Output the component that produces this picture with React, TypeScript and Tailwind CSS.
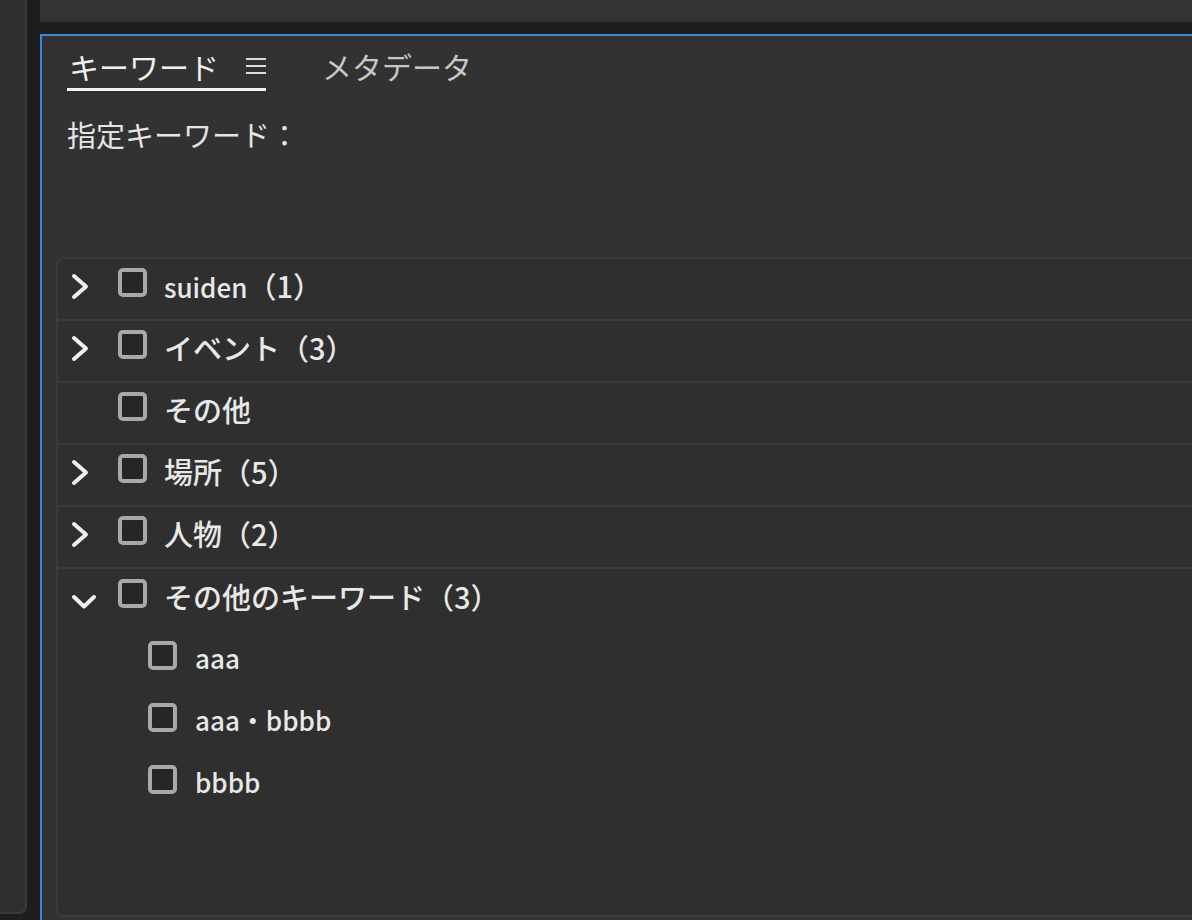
import React from 'react';

type Node = {
  name: string;
  count?: string;
  latin?: boolean;
  expandable?: boolean;
  open?: boolean;
  children?: string[];
};

const keywords: Node[] = [
  { name: 'suiden', count: '（1）', latin: true, expandable: true },
  { name: 'イベント', count: '（3）', expandable: true },
  { name: 'その他' },
  { name: '場所', count: '（5）', expandable: true },
  { name: '人物', count: '（2）', expandable: true },
  { name: 'その他のキーワード', count: '（3）', expandable: true, open: true, children: ['aaa', 'aaa・bbbb', 'bbbb'] },
];

const font = { fontFamily: '"Noto Sans CJK JP", "Noto Sans", sans-serif' };

function Chevron({ open }: { open?: boolean }) {
  if (open) {
    return (
      <svg width="28" height="18" viewBox="0 0 28 18" className="block mt-[12px]">
        <path d="M3 4 L13 13.5 L23 4" fill="none" stroke="#f0f0f0" strokeWidth="4" strokeLinecap="round" strokeLinejoin="round" />
      </svg>
    );
  }
  return (
    <svg width="20" height="28" viewBox="0 0 20 28" className="block mt-[4px]">
      <path d="M3 3 L15 13.5 L3 24" fill="none" stroke="#f0f0f0" strokeWidth="4" strokeLinecap="round" strokeLinejoin="round" />
    </svg>
  );
}

function Checkbox() {
  return <div className="w-[29px] h-[29px] mb-[6px] shrink-0 rounded-[5px] border-4 border-[#a8a8a8] bg-[#262626]" />;
}

function MenuIcon() {
  return (
    <svg width="20" height="18" viewBox="0 0 20 18" className="block">
      <path d="M0 2 H20 M0 9 H20 M0 16 H20" stroke="#dcdcdc" strokeWidth="2" />
    </svg>
  );
}

export default function App() {
  return (
    <div className="w-[1192px] h-[920px] bg-[#1e1e1e] flex overflow-hidden text-[#e8e8e8]" style={font}>
      {/* 左パネル */}
      <div className="w-[27px] h-[914px] shrink-0 bg-[#2f2f2f] border-r-2 border-b-2 border-[#3a3a3a] rounded-br-[8px]" />
      <div className="w-[13px] shrink-0" />

      <div className="flex-1 flex flex-col min-w-0">
        <div className="h-[22px] bg-[#333333] shrink-0" />
        <div className="h-[12px] shrink-0" />

        <div className="flex-1 flex flex-col bg-[#323232] border-l-2 border-t-2 border-[#3a86d8]">
          {/* タブ */}
          <div className="flex items-end pl-[25px] h-[55px]">
            <div className="flex items-center gap-[27px] pl-[2px] h-[48px] border-b-[3px] border-[#f2f2f2]">
              <span className="text-[30px] leading-none text-[#f0f0f0]">キーワード</span>
              <MenuIcon />
            </div>
            <div className="flex items-center h-[48px] ml-[56px] pb-[3px]">
              <span className="text-[30px] leading-none text-[#c6c6c6]">メタデータ</span>
            </div>
          </div>

          <div className="pl-[25px] mt-[29px] text-[29px] leading-none text-[#e4e4e4]">指定キーワード：</div>

          {/* キーワード一覧 */}
          <div className="flex-1 mt-[108px] ml-[14px] -mr-4 mb-[3px] border-2 border-[#3a3a3a] rounded-l-[8px] bg-[#2f2f2f]">
            {keywords.map((k) => (
              <div key={k.name}>
                <div className={`h-[62px] flex items-center pb-[8px] ${k.open ? '' : 'border-b-2 border-[#3b3b3b]'}`}>
                  <div className="w-[60px] pl-[13px] shrink-0 flex items-center">
                    {k.expandable && <Chevron open={k.open} />}
                  </div>
                  <Checkbox />
                  <span className="ml-[17px] leading-none whitespace-nowrap font-medium">
                    <span className={k.latin ? 'text-[26px]' : 'text-[29px]'}>{k.name}</span>
                    {k.count && <span className="text-[29px]">{k.count}</span>}
                  </span>
                </div>
                {k.children?.map((c) => (
                  <div key={c} className="h-[62px] flex items-center pb-[8px] pl-[90px]">
                    <Checkbox />
                    <span className="ml-[18px] text-[26px] leading-none whitespace-nowrap font-medium">{c}</span>
                  </div>
                ))}
              </div>
            ))}
          </div>
        </div>
      </div>
    </div>
  );
}
